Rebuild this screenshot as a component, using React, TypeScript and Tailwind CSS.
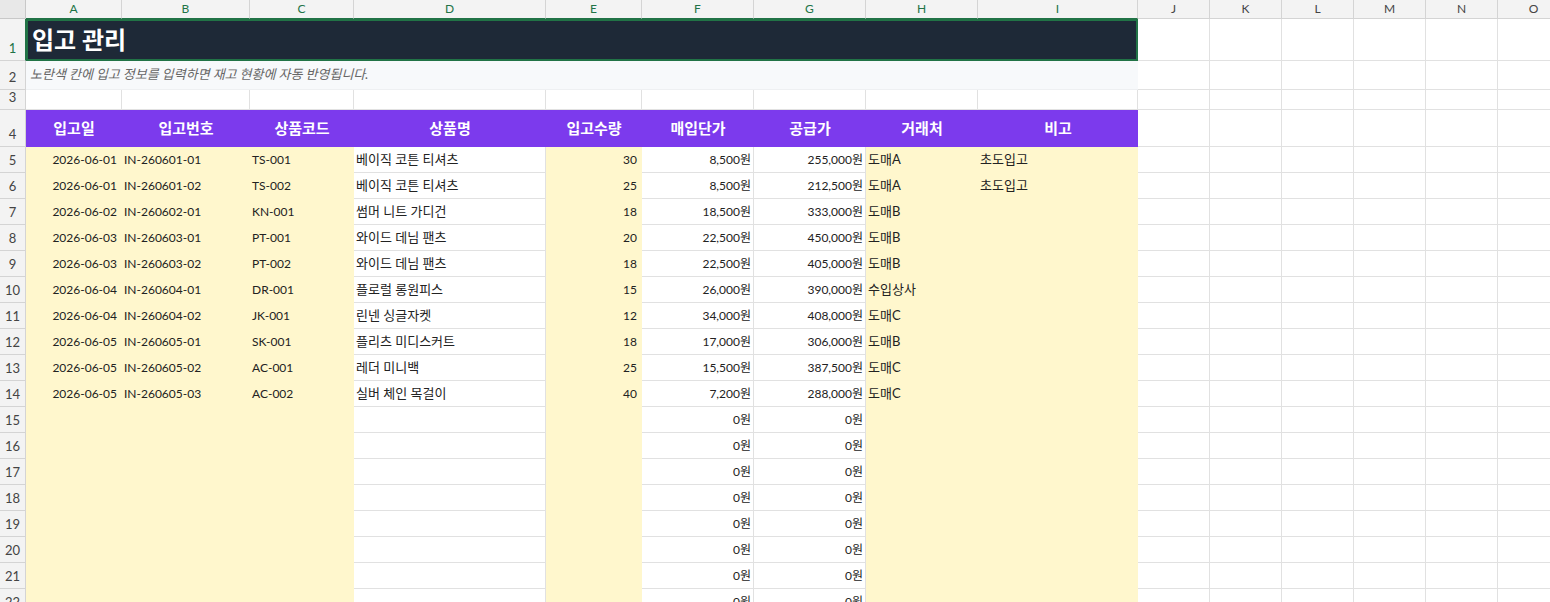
const cols = [
  { l: "A", w: 96, y: true },
  { l: "B", w: 128, y: true },
  { l: "C", w: 104, y: true },
  { l: "D", w: 192, y: false },
  { l: "E", w: 96, y: true },
  { l: "F", w: 112, y: false },
  { l: "G", w: 112, y: false },
  { l: "H", w: 112, y: true },
  { l: "I", w: 160, y: true },
  { l: "J", w: 72, y: false },
  { l: "K", w: 72, y: false },
  { l: "L", w: 72, y: false },
  { l: "M", w: 72, y: false },
  { l: "N", w: 72, y: false },
  { l: "O", w: 72, y: false },
];

const heads = ["입고일", "입고번호", "상품코드", "상품명", "입고수량", "매입단가", "공급가", "거래처", "비고"];

const data: string[][] = [
  ["2026-06-01", "IN-260601-01", "TS-001", "베이직 코튼 티셔츠", "30", "8,500원", "255,000원", "도매A", "초도입고"],
  ["2026-06-01", "IN-260601-02", "TS-002", "베이직 코튼 티셔츠", "25", "8,500원", "212,500원", "도매A", "초도입고"],
  ["2026-06-02", "IN-260602-01", "KN-001", "썸머 니트 가디건", "18", "18,500원", "333,000원", "도매B", ""],
  ["2026-06-03", "IN-260603-01", "PT-001", "와이드 데님 팬츠", "20", "22,500원", "450,000원", "도매B", ""],
  ["2026-06-03", "IN-260603-02", "PT-002", "와이드 데님 팬츠", "18", "22,500원", "405,000원", "도매B", ""],
  ["2026-06-04", "IN-260604-01", "DR-001", "플로럴 롱원피스", "15", "26,000원", "390,000원", "수입상사", ""],
  ["2026-06-04", "IN-260604-02", "JK-001", "린넨 싱글자켓", "12", "34,000원", "408,000원", "도매C", ""],
  ["2026-06-05", "IN-260605-01", "SK-001", "플리츠 미디스커트", "18", "17,000원", "306,000원", "도매B", ""],
  ["2026-06-05", "IN-260605-02", "AC-001", "레더 미니백", "25", "15,500원", "387,500원", "도매C", ""],
  ["2026-06-05", "IN-260605-03", "AC-002", "실버 체인 목걸이", "40", "7,200원", "288,000원", "도매C", ""],
];
for (let i = 0; i < 8; i++) data.push(["", "", "", "", "", "0원", "0원", "", ""]);

const align = ["text-right pr-1", "text-left pl-0.5", "text-left pl-0.5", "text-left pl-0.5", "text-right pr-1", "text-right pr-0.5", "text-right pr-0.5", "text-left pl-0.5", "text-left pl-0.5"];

const font = { fontFamily: "Lato, 'Noto Sans CJK KR', sans-serif" };

export default function App() {
  const template = "26px " + cols.map((c) => c.w + "px").join(" ");
  return (
    <div className="w-[1550px] h-[602px] overflow-hidden bg-white text-[13px] text-[#222]" style={font}>
      <div className="grid" style={{ gridTemplateColumns: template, gridAutoRows: "26px", gridTemplateRows: "19px 42px 29px 20px 37px" }}>
        {/* column header */}
        <div className="bg-[#e8e8e8] border-r border-b border-[#c8c8c8]" />
        {cols.map((c, i) => (
          <div key={c.l} className={`bg-[#f3f3f3] border-r border-b border-[#d4d4d4] flex items-center justify-center text-[12px] ${i < 9 ? "text-[#217346] border-b-[#217346]" : "text-[#444]"}`}>
            {c.l}
          </div>
        ))}

        {/* row 1 */}
        <RowNum n={1} sel />
        <div className="col-span-9 bg-[#1e2937] border-2 border-[#217346] flex items-center pl-1 text-white text-[24px] font-bold">입고 관리</div>
        {cols.slice(9).map((c) => <Cell key={c.l} />)}

        {/* row 2 */}
        <RowNum n={2} />
        <div className="col-span-9 bg-[#f7f9fb] flex items-center pl-1 text-[#666] text-[13px] italic border-b border-[#eef0f2]">
          노란색 칸에 입고 정보를 입력하면 재고 현황에 자동 반영됩니다.
        </div>
        {cols.slice(9).map((c) => <Cell key={c.l} />)}

        {/* row 3 */}
        <RowNum n={3} />
        {cols.map((c) => <Cell key={c.l} />)}

        {/* row 4 */}
        <RowNum n={4} />
        {heads.map((h) => (
          <div key={h} className="bg-[#7c3aed] text-white font-bold text-[15px] flex items-center justify-center">{h}</div>
        ))}
        {cols.slice(9).map((c) => <Cell key={c.l} />)}

        {data.map((row, r) => (
          <Row key={r} n={r + 5} row={row} />
        ))}
      </div>
    </div>
  );
}

function RowNum({ n, sel }: { n: number; sel?: boolean }) {
  return (
    <div className={`bg-[#f3f3f3] border-r border-b border-[#d4d4d4] flex items-end justify-center pb-0.5 text-[13px] ${sel ? "text-[#217346] border-r-[#217346]" : "text-[#444]"}`}>
      {n}
    </div>
  );
}

function Cell({ y, children, cls }: { y?: boolean; children?: React.ReactNode; cls?: string }) {
  return (
    <div className={`flex items-center whitespace-nowrap overflow-hidden border-r border-b ${y ? "bg-[#fff7cd] border-[#fff7cd]" : "border-[#e1e1e1]"} ${cls ?? ""}`}>
      <span className="w-full">{children}</span>
    </div>
  );
}

function Row({ n, row }: { n: number; row: string[] }) {
  return (
    <>
      <RowNum n={n} />
      {cols.map((c, i) => (
        <Cell key={c.l} y={c.y} cls={i < 9 ? align[i] + (i === 3 || i === 7 || i === 8 ? " text-[13px]" : " text-[12px]") : ""}>
          {i < 9 ? row[i] : ""}
        </Cell>
      ))}
    </>
  );
}
